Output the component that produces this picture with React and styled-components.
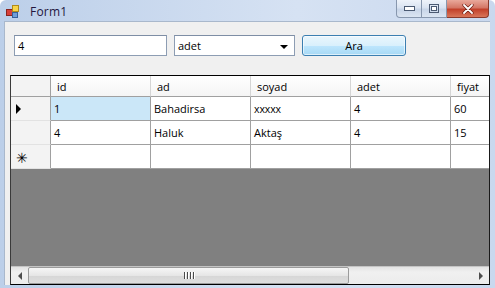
import React from "react"
import styled, { createGlobalStyle } from "styled-components"

const GlobalStyle = createGlobalStyle`
  html, body {
    margin: 0;
    padding: 0;
    overflow: hidden;
    background: #ffffff;
  }
`

const Window = styled.div`
  width: 495px;
  height: 288px;
  display: flex;
  flex-direction: column;
  background: linear-gradient(to right, #bccfe9, #d6e2f3 60%, #c9d8ee);
  font-family: "Open Sans", "Liberation Sans", sans-serif;
  box-sizing: border-box;
  border-top-left-radius: 6px;
  border-top-right-radius: 6px;
  overflow: hidden;
`

const TitleBar = styled.div`
  height: 20px;
  display: flex;
  align-items: flex-start;
  flex-shrink: 0;
`

const AppIcon = styled.svg`
  margin: 5px 0 0 6px;
  width: 13px;
  height: 13px;
`

const Title = styled.span`
  margin: 3px 0 0 11px;
  font-size: 12px;
  color: #24163e;
  letter-spacing: 0.2px;
`

const CaptionButtons = styled.div`
  margin-left: auto;
  margin-right: 6px;
  display: flex;
  height: 18px;
`

const CaptionButton = styled.div`
  width: ${p => p.$w}px;
  height: 18px;
  box-sizing: border-box;
  border: 1px solid ${p => (p.$close ? "#8a3a2c" : "#8797ae")};
  border-top: none;
  border-left-width: ${p => (p.$first ? 1 : 0)}px;
  border-bottom-left-radius: ${p => (p.$first ? 4 : 0)}px;
  border-bottom-right-radius: ${p => (p.$close ? 4 : 0)}px;
  background: ${p =>
    p.$close
      ? "linear-gradient(#e9a99b, #d47766 45%, #c2412b 55%, #d9765a)"
      : "linear-gradient(#eef3fa, #d9e3f1 45%, #c8d5e8 55%, #dbe5f2)"};
  display: flex;
  align-items: center;
  justify-content: center;
`

const Frame = styled.div`
  flex: 1;
  display: flex;
  padding: 1px 5px 3px 4px;
  min-height: 0;
`

const Client = styled.div`
  flex: 1;
  display: flex;
  flex-direction: column;
  background: #f0f0f0;
  border: 1px solid #a9b8cc;
  border-bottom: none;
  border-right: none;
  min-height: 0;
`

const Toolbar = styled.div`
  display: flex;
  gap: 7px;
  padding: 13px 0 0 9px;
  flex-shrink: 0;
`

const TextBox = styled.div`
  width: 153px;
  height: 21px;
  box-sizing: border-box;
  background: #fff;
  border: 1px solid #8d9db3;
  border-top-color: #7e8ea5;
  padding: 0 3px;
  font-size: 11px;
  line-height: 19px;
  color: #000;
`

const Combo = styled(TextBox)`
  width: 121px;
  display: flex;
  align-items: center;
  justify-content: space-between;
  padding-right: 6px;
`

const ComboArrow = styled.span`
  width: 0;
  height: 0;
  border-left: 4px solid transparent;
  border-right: 4px solid transparent;
  border-top: 4px solid #000;
  margin-top: 2px;
`

const Button = styled.div`
  width: 104px;
  height: 21px;
  box-sizing: border-box;
  border: 1px solid #3c7fb1;
  border-radius: 3px;
  background: linear-gradient(#eaf6fd, #d9f0fc 50%, #bee6fd 51%, #a7d9f5);
  box-shadow: inset 0 0 0 1px rgba(255, 255, 255, 0.6);
  font-size: 11px;
  line-height: 19px;
  text-align: center;
  color: #000;
`

const Grid = styled.div`
  flex: 1;
  margin: 19px 0 0 5px;
  display: flex;
  flex-direction: column;
  border: 1px solid #000;
  border-left-color: #3a3a3a;
  border-right-color: #1a1a1a;
  min-height: 0;
  overflow: hidden;
`

const Table = styled.div`
  display: grid;
  grid-template-columns: 40px repeat(5, 100px);
  grid-template-rows: 21px repeat(3, 24px);
  background: #fff;
  flex-shrink: 0;
  width: 478px;
  overflow: hidden;
`

const Cell = styled.div`
  box-sizing: border-box;
  border-right: 1px solid ${p => (p.$head ? "#d5d5d5" : "#a0a0a0")};
  border-bottom: 1px solid ${p => (p.$rowHead ? "#e2e2e2" : "#a0a0a0")};
  background: ${p =>
    p.$selected ? "#cbe7f8" : p.$rowHead ? "#f3f3f3" : p.$head ? "linear-gradient(#ffffff, #f5f5f5)" : "#fff"};
  font-size: 11px;
  color: #000;
  padding-left: ${p => (p.$head ? 6 : 3)}px;
  display: flex;
  align-items: center;
  white-space: nowrap;
  overflow: hidden;
  ${p => p.$corner && "border-right-color: #a0a0a0; background: #f3f3f3;"}
  ${p => p.$rowHead && "border-right-color: #a0a0a0; padding-left: 5px;"}
`

const Small = styled.span`
  font-size: 10.5px;
  letter-spacing: -0.1px;
`

const Indicator = styled.span`
  width: 0;
  height: 0;
  border-top: 5px solid transparent;
  border-bottom: 5px solid transparent;
  border-left: 5px solid #000;
`

const Star = styled.span`
  font-size: 14px;
  font-family: "DejaVu Sans", sans-serif;
  margin-top: 3px;
`

const Empty = styled.div`
  flex: 1;
  background: #808080;
`

const ScrollBar = styled.div`
  height: 17px;
  display: flex;
  background: linear-gradient(#e3e3e3, #f0f0f0 30%, #ececec);
  border-top: 1px solid #c4c4c4;
  flex-shrink: 0;
`

const Track = styled.div`
  flex: 1;
`

const ArrowBtn = styled.div`
  width: 17px;
  display: flex;
  align-items: center;
  justify-content: center;
`

const ArrowGlyph = styled.span`
  width: 0;
  height: 0;
  border-top: 4px solid transparent;
  border-bottom: 4px solid transparent;
  ${p => (p.$left ? "border-right: 4px solid #4d4d4d;" : "border-left: 4px solid #4d4d4d;")}
`

const Thumb = styled.div`
  width: 321px;
  box-sizing: border-box;
  border: 1px solid #9b9b9b;
  border-radius: 2px;
  background: linear-gradient(to bottom, #f6f6f6, #e6e6e6 50%, #d6d6d6 51%, #dedede);
  display: flex;
  align-items: center;
  justify-content: center;
`

const Grip = styled.div`
  display: flex;
  gap: 2px;
  span {
    width: 1px;
    height: 7px;
    background: #4a4a4a;
    box-shadow: 1px 0 0 #fff;
  }
`

const columns = ["id", "ad", "soyad", "adet", "fiyat"]

const rows = [
  { id: "1", ad: "Bahadirsa", soyad: "xxxxx", adet: "4", fiyat: "60" },
  { id: "4", ad: "Haluk", soyad: "Aktaş", adet: "4", fiyat: "15" },
]

export default function App() {
  return (
    <>
      <GlobalStyle />
      <Window>
        <TitleBar>
          <AppIcon viewBox="0 0 13 13">
            <rect x="0.5" y="4.5" width="6" height="6" fill="#d8403a" stroke="#8a2520" />
            <rect x="6.5" y="0.5" width="6" height="6" fill="#f7d54a" stroke="#b08a1a" />
            <rect x="6.5" y="7.5" width="5" height="5" fill="#6f9ed8" stroke="#36609a" />
          </AppIcon>
          <Title>Form1</Title>
          <CaptionButtons>
            <CaptionButton $w={26} $first>
              <svg width="11" height="5" viewBox="0 0 11 5">
                <rect x="0.5" y="0.5" width="10" height="4" fill="#fff" stroke="#4b5a72" />
              </svg>
            </CaptionButton>
            <CaptionButton $w={25}>
              <svg width="10" height="9" viewBox="0 0 10 9">
                <rect x="0.5" y="0.5" width="9" height="8" fill="none" stroke="#4b5a72" />
                <rect x="2.5" y="2.5" width="5" height="4" fill="#fff" stroke="#4b5a72" />
              </svg>
            </CaptionButton>
            <CaptionButton $w={42} $close>
              <svg width="12" height="10" viewBox="0 0 12 10">
                <path d="M2 1 L10 9 M10 1 L2 9" stroke="#6a1d12" strokeWidth="3.2" strokeLinecap="round" />
                <path d="M2 1 L10 9 M10 1 L2 9" stroke="#fff" strokeWidth="1.8" strokeLinecap="round" />
              </svg>
            </CaptionButton>
          </CaptionButtons>
        </TitleBar>
        <Frame>
          <Client>
            <Toolbar>
              <TextBox>4</TextBox>
              <Combo>
                adet
                <ComboArrow />
              </Combo>
              <Button>Ara</Button>
            </Toolbar>
            <Grid>
              <Table>
                <Cell $head $corner />
                {columns.map(c => (
                  <Cell key={c} $head>
                    {c}
                  </Cell>
                ))}
                {rows.map((r, i) => (
                  <React.Fragment key={i}>
                    <Cell $rowHead>{i === 0 && <Indicator />}</Cell>
                    {columns.map(c => (
                      <Cell key={c} $selected={i === 0 && c === "id"}>
                        {c === "soyad" && r[c] === "xxxxx" ? <Small>{r[c]}</Small> : r[c]}
                      </Cell>
                    ))}
                  </React.Fragment>
                ))}
                <Cell $rowHead>
                  <Star>✳</Star>
                </Cell>
                {columns.map(c => (
                  <Cell key={c} />
                ))}
              </Table>
              <Empty />
              <ScrollBar>
                <ArrowBtn>
                  <ArrowGlyph $left />
                </ArrowBtn>
                <Thumb>
                  <Grip>
                    <span />
                    <span />
                    <span />
                    <span />
                  </Grip>
                </Thumb>
                <Track />
                <ArrowBtn>
                  <ArrowGlyph />
                </ArrowBtn>
              </ScrollBar>
            </Grid>
          </Client>
        </Frame>
      </Window>
    </>
  )
}
